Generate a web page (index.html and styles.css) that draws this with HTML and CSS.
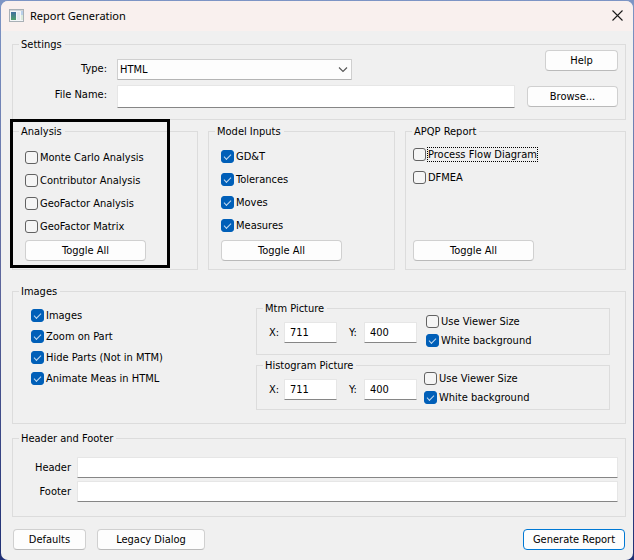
FILE: index.html
```html
<!DOCTYPE html>
<html lang="en">
<head>
<meta charset="utf-8">
<meta name="viewport" content="width=device-width, initial-scale=1">
<title>Report Generation</title>
<link rel="stylesheet" href="styles.css">
</head>
<body>
<main class="window">
  <header class="titlebar">
    <svg class="app-icon" width="15" height="13" viewBox="0 0 15 13" aria-hidden="true">
      <defs>
        <linearGradient id="pane" x1="0" y1="0" x2="0" y2="1">
          <stop offset="0" stop-color="#3f6fa0"/>
          <stop offset="1" stop-color="#4fa06c"/>
        </linearGradient>
      </defs>
      <rect x="0.5" y="0.5" width="14" height="12" fill="#f4f6f8" stroke="#a9b0b6"/>
      <rect x="1" y="1" width="13" height="1" fill="#cfd5da"/>
      <rect x="2" y="3" width="5" height="8" fill="url(#pane)"/>
      <rect x="8" y="3" width="3" height="8" fill="#e3e9ee"/>
      <rect x="12" y="2" width="2" height="4" fill="#b9d0ea"/>
      <rect x="12" y="6" width="2" height="5" fill="#dcebdc"/>
    </svg>
    <h1 class="title">Report Generation</h1>
    <button class="close" type="button" aria-label="Close">
      <svg width="11" height="11" viewBox="0 0 11 11" aria-hidden="true"><path d="M0.5 0.5L10.5 10.5M10.5 0.5L0.5 10.5" fill="none" stroke="#1a1a1a" stroke-width="1.1"/></svg>
    </button>
  </header>

  <form class="content">
    <fieldset class="group">
      <legend>Settings</legend>
      <div class="settings">
        <div class="settings-form">
          <label for="type">Type:</label>
          <div class="select-wrap">
            <select id="type"><option>HTML</option></select>
            <svg class="chevron" width="10" height="6" viewBox="0 0 10 6" aria-hidden="true"><path d="M1 0.5L5 4.5L9 0.5" fill="none" stroke="#555" stroke-width="1.1"/></svg>
          </div>
          <label for="file">File Name:</label>
          <input class="field tall" id="file" type="text">
        </div>
        <div class="settings-buttons">
          <button class="btn help" type="button">Help</button>
          <button class="btn" type="button">Browse...</button>
        </div>
      </div>
    </fieldset>

    <div class="reports">
      <div class="report highlighted">
        <fieldset class="group">
          <legend>Analysis</legend>
          <div class="checks analysis">
            <label class="check"><input type="checkbox"><span>Monte Carlo Analysis</span></label>
            <label class="check"><input type="checkbox"><span>Contributor Analysis</span></label>
            <label class="check"><input type="checkbox"><span>GeoFactor Analysis</span></label>
            <label class="check"><input type="checkbox"><span>GeoFactor Matrix</span></label>
            <button class="btn toggle" type="button">Toggle All</button>
          </div>
        </fieldset>
      </div>
      <div class="report">
        <fieldset class="group">
          <legend>Model Inputs</legend>
          <div class="checks model">
            <label class="check"><input type="checkbox" checked><span>GD&amp;T</span></label>
            <label class="check"><input type="checkbox" checked><span>Tolerances</span></label>
            <label class="check"><input type="checkbox" checked><span>Moves</span></label>
            <label class="check"><input type="checkbox" checked><span>Measures</span></label>
            <button class="btn toggle" type="button">Toggle All</button>
          </div>
        </fieldset>
      </div>
      <div class="report">
        <fieldset class="group">
          <legend>APQP Report</legend>
          <div class="checks apqp">
            <label class="check current"><input type="checkbox"><span>Process Flow Diagram</span></label>
            <label class="check"><input type="checkbox"><span>DFMEA</span></label>
            <button class="btn toggle" type="button">Toggle All</button>
          </div>
        </fieldset>
      </div>
    </div>

    <fieldset class="group images">
      <legend>Images</legend>
      <div class="images-body">
        <div class="image-options">
          <label class="check"><input type="checkbox" checked><span>Images</span></label>
          <label class="check"><input type="checkbox" checked><span>Zoom on Part</span></label>
          <label class="check"><input type="checkbox" checked><span>Hide Parts (Not in MTM)</span></label>
          <label class="check"><input type="checkbox" checked><span>Animate Meas in HTML</span></label>
        </div>
        <div class="pictures">
          <fieldset class="group">
            <legend>Mtm Picture</legend>
            <div class="picture">
              <div class="sizes">
                <label for="mx">X:</label>
                <input class="field" id="mx" type="text" value="711">
                <label class="second" for="my">Y:</label>
                <input class="field" id="my" type="text" value="400">
              </div>
              <div class="picture-checks">
                <label class="check"><input type="checkbox"><span>Use Viewer Size</span></label>
                <label class="check"><input type="checkbox" checked><span>White background</span></label>
              </div>
            </div>
          </fieldset>
          <fieldset class="group">
            <legend>Histogram Picture</legend>
            <div class="picture histogram">
              <div class="sizes">
                <label for="hx">X:</label>
                <input class="field" id="hx" type="text" value="711">
                <label class="second" for="hy">Y:</label>
                <input class="field" id="hy" type="text" value="400">
              </div>
              <div class="picture-checks">
                <label class="check"><input type="checkbox"><span>Use Viewer Size</span></label>
                <label class="check"><input type="checkbox" checked><span>White background</span></label>
              </div>
            </div>
          </fieldset>
        </div>
      </div>
    </fieldset>

    <fieldset class="group header-footer">
      <legend>Header and Footer</legend>
      <div class="hf-form">
        <label for="header">Header</label>
        <input class="field" id="header" type="text">
        <label for="footer">Footer</label>
        <input class="field" id="footer" type="text">
      </div>
    </fieldset>

    <div class="actions">
      <button class="btn defaults" type="button">Defaults</button>
      <button class="btn legacy" type="button">Legacy Dialog</button>
      <button class="btn primary" type="button">Generate Report</button>
    </div>
  </form>
</main>
</body>
</html>
```
FILE: styles.css
```css
*, *::before, *::after { box-sizing: border-box; }

body {
  margin: 0;
  padding: 1px;
  min-height: 100vh;
  background: linear-gradient(#7d95c5, #5d669c 50%, #1f2f74);
  font: 11px/13px "DejaVu Sans Condensed", "DejaVu Sans", sans-serif;
  color: #000;
}

button, input, select { font: inherit; color: inherit; margin: 0; }

.window {
  min-height: calc(100vh - 2px);
  background: #f0f0f0;
  border-radius: 7px;
  overflow: hidden;
}

/* Title bar */
.titlebar {
  display: flex;
  align-items: center;
  height: 30px;
  padding: 0 10px 2px 8px;
  background: #f9f0ee;
}
.title {
  flex: 1;
  margin: 0 0 0 6px;
  font: 400 11px/15px "Noto Sans", "Open Sans", sans-serif;
}
.close {
  display: flex;
  padding: 0;
  border: 0;
  background: none;
}

/* Group boxes */
.content { padding: 8px 7px 10px 11px; }
.group {
  min-width: 0;
  margin: 0;
  padding: 0;
  border: 1px solid #dcdcdc;
}
.group > legend {
  margin-left: 6px;
  padding: 0 3px 0 2px;
  line-height: 11px;
}

/* Controls */
.btn {
  height: 21px;
  padding: 0 4px;
  border: 1px solid #d0d0d0;
  border-bottom-color: #bababa;
  border-radius: 4px;
  background: #fdfdfd;
  line-height: 17px;
  white-space: nowrap;
}
.btn.primary { border-color: #0078d4; }

.field {
  width: 100%;
  min-width: 0;
  height: 21px;
  padding: 0 5px;
  border: 1px solid #e6e6e6;
  border-bottom-color: #868686;
  border-radius: 1px;
  background: #fff;
  outline: 0;
}
.field.tall { height: 23px; }

.check {
  display: flex;
  align-items: center;
  gap: 2px;
  height: 13px;
  white-space: nowrap;
}
.check input {
  appearance: none;
  display: grid;
  place-items: center;
  flex: none;
  width: 13px;
  height: 13px;
  border: 1px solid #626262;
  border-radius: 3px;
  background: #f5f5f5;
}
.check input:checked {
  border-color: #005fb8;
  background: #005fb8;
}
.check input:checked::before {
  content: "";
  width: 7px;
  height: 4px;
  margin-bottom: 2px;
  border: solid #c4dbf0;
  border-width: 0 0 1px 1px;
  transform: rotate(-45deg);
}
.check.current span { outline: 1px dotted #000; }

/* Settings */
.settings {
  display: flex;
  gap: 12px;
  padding: 0 7px 11px 0;
}
.settings-form {
  flex: 1;
  display: grid;
  grid-template-columns: 94px 1fr;
  column-gap: 10px;
  row-gap: 5px;
  align-content: start;
  padding-top: 9px;
}
.settings-form label { padding-top: 3px; text-align: right; }
.select-wrap { position: relative; width: 59%; }
.select-wrap select {
  appearance: none;
  display: block;
  width: 100%;
  height: 21px;
  padding: 0 20px 0 2px;
  border: 1px solid #cfcfcf;
  border-bottom-color: #b4b4b4;
  border-radius: 1px;
  background: #fdfdfd;
}
.chevron {
  position: absolute;
  top: 8px;
  right: 4px;
  pointer-events: none;
}
.settings-buttons {
  display: flex;
  flex-direction: column;
  gap: 15px;
  width: 91px;
}
.help { align-self: flex-end; width: 73px; }

/* Report groups */
.reports {
  display: grid;
  grid-template-columns: 186fr 187fr 221fr;
  gap: 10px;
  margin-top: 6px;
}
.report { display: flex; }
.report .group {
  flex: 1;
  display: flex;
  flex-direction: column;
}
.highlighted { position: relative; }
.highlighted::after {
  content: "";
  position: absolute;
  top: -7px;
  right: 28px;
  bottom: 2px;
  left: -2px;
  border: 3px solid #000;
  pointer-events: none;
}
.checks {
  flex: 1;
  display: flex;
  flex-direction: column;
  align-items: flex-start;
  gap: 10px;
  padding: 14px 12px 8px;
}
.checks.model { padding-top: 13px; }
.checks.apqp { padding: 11px 7px 8px; }
.toggle {
  width: 121px;
  margin-top: auto;
}
.analysis .toggle { margin-top: -3px; }
.model .toggle { margin-top: -2px; }

/* Images */
.images { margin-top: 16px; }
.images-body {
  display: grid;
  grid-template-columns: 225fr 354fr;
  padding: 6px 15px 13px 18px;
}
.image-options {
  display: flex;
  flex-direction: column;
  gap: 8px;
  padding-top: 6px;
}
.pictures {
  display: flex;
  flex-direction: column;
  gap: 5px;
}
.picture {
  display: flex;
  align-items: flex-start;
  gap: 9px;
  padding: 0 12px 7px;
}
.picture.histogram { gap: 7px; padding-bottom: 5px; }
.sizes {
  display: grid;
  grid-template-columns: 15px 53px 27px 53px;
  align-items: center;
  padding-top: 8px;
}
.sizes .second { padding-left: 12px; }
.picture-checks {
  display: flex;
  flex-direction: column;
  gap: 6px;
  padding-top: 1px;
}

/* Header and footer */
.header-footer { margin-top: 9px; }
.hf-form {
  display: grid;
  grid-template-columns: 58px 1fr;
  column-gap: 6px;
  row-gap: 3px;
  align-items: center;
  padding: 13px 7px 14px 0;
}
.hf-form label { text-align: right; }

.actions {
  display: flex;
  gap: 11px;
  padding: 12px 1px 0;
}
.defaults { width: 73px; }
.legacy { width: 108px; }
.primary { width: 102px; margin-left: auto; }
```
